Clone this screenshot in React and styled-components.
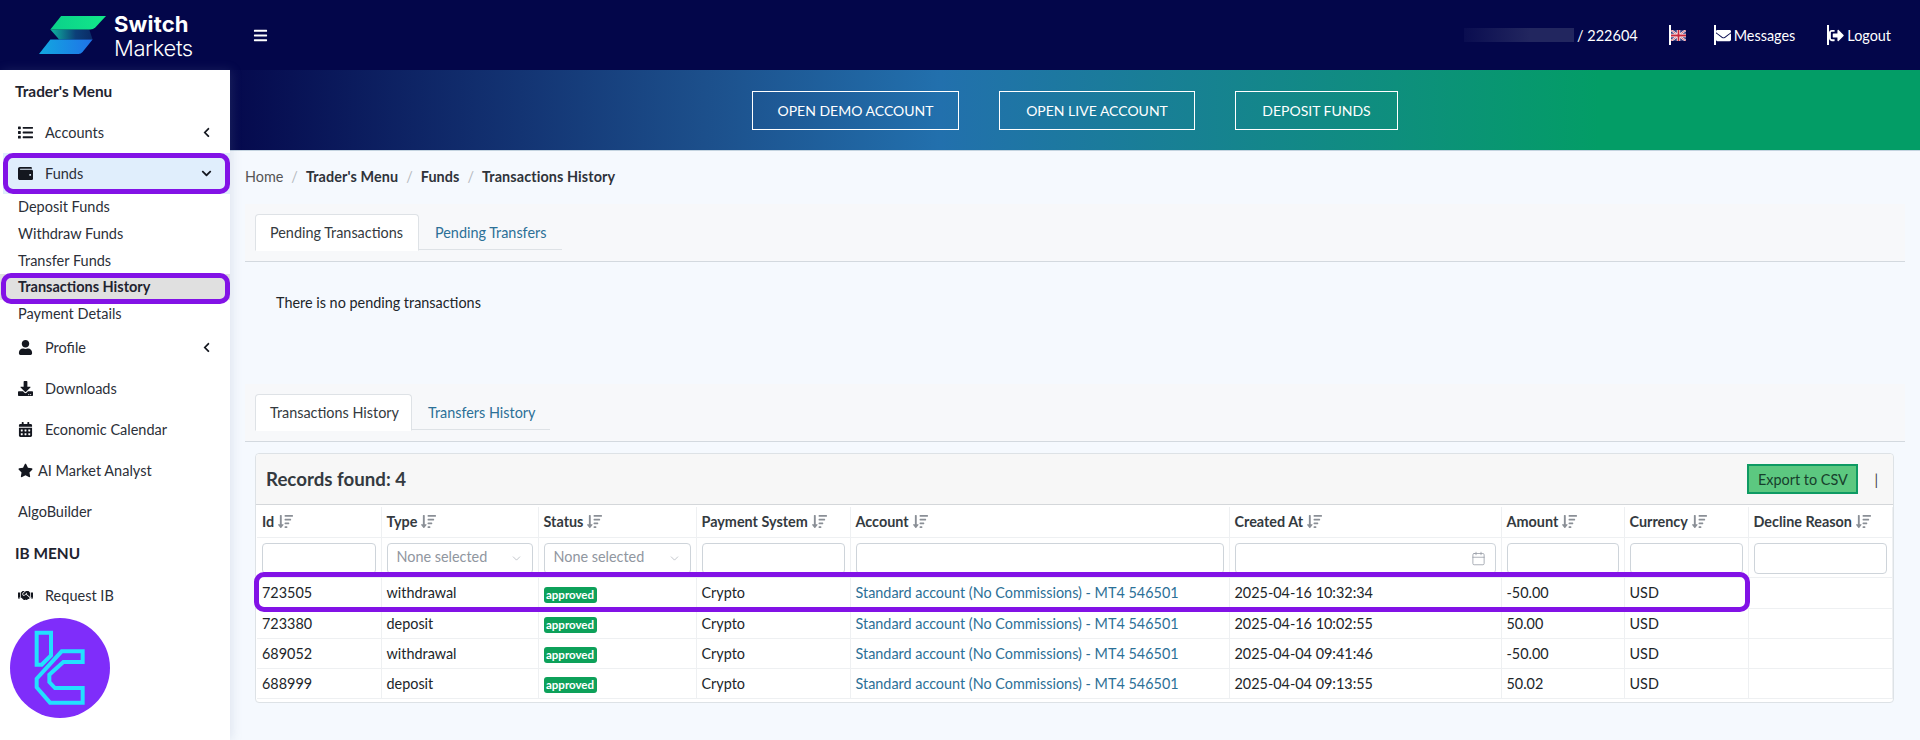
import styled, { createGlobalStyle } from "styled-components";
import {
  FaList,
  FaWallet,
  FaUser,
  FaDownload,
  FaCalendarAlt,
  FaStar,
  FaHandshake,
  FaBars,
  FaChevronLeft,
  FaChevronDown,
  FaEnvelope,
  FaSignOutAlt,
  FaSortAmountDown,
} from "react-icons/fa";
import { ChevronDown, Calendar } from "lucide-react";

const GlobalStyle = createGlobalStyle`
  html, body {
    margin: 0;
    height: 740px;
    overflow: hidden;
    background: #f5f9fe;
    font-family: "Lato", "Noto Sans", sans-serif;
    font-size: 14.4px;
    color: #212529;
  }
  * {
    box-sizing: border-box;
  }
`;

const Page = styled.div`
  width: 1920px;
  height: 740px;
  display: grid;
  grid-template-columns: 230px 1fr;
  grid-template-rows: 70px 670px;
`;

const TopBar = styled.header`
  grid-column: 1 / 3;
  background: #03064a;
  display: flex;
  align-items: center;
  color: #fff;
`;

const LogoBox = styled.div`
  width: 230px;
  display: flex;
  align-items: center;
  padding-left: 39px;
  gap: 8px;
`;

const LogoText = styled.div`
  font-family: "Inter", sans-serif;
  font-size: 22px;
  line-height: 24px;
  padding-top: 2px;
  color: #fff;
`;

const LogoStrong = styled.div`
  font-weight: 700;
  letter-spacing: 0.2px;
`;

const LogoLight = styled.div`
  font-weight: 300;
  letter-spacing: -0.4px;
`;

const MenuToggle = styled.div`
  margin-left: 23px;
  display: flex;
  font-size: 15px;
`;

const UserBox = styled.div`
  margin-left: auto;
  padding-right: 29px;
  display: flex;
  align-items: center;
`;

const MaskedName = styled.span`
  width: 110px;
  height: 14px;
  background: linear-gradient(90deg, #0a0d50, #22265f 60%);
`;

const Login = styled.span`
  margin-left: 3px;
  margin-right: 31px;
  font-size: 14.5px;
`;

const TopLink = styled.a`
  display: flex;
  align-items: center;
  height: 20px;
  border-left: 2px solid #fff;
  margin-right: ${(p) => p.$gap}px;
  font-size: 14.4px;
  color: #fff;
`;

const TopIcon = styled.span`
  width: 18px;
  display: flex;
  font-size: 15px;
`;

const Sidebar = styled.aside`
  background: #fff;
  box-shadow: 2px 0 10px rgba(120, 140, 170, 0.18);
  position: relative;
  z-index: 2;
`;

const SideTitle = styled.div`
  height: 41.5px;
  padding-left: 15px;
  display: flex;
  align-items: center;
  font-size: 15.4px;
  font-weight: 700;
  color: #1f2430;
`;

const SideItem = styled.div`
  position: relative;
  height: 41px;
  display: flex;
  align-items: center;
  padding-left: ${(p) => (p.$active ? "15px" : "18px")};
  font-size: 14.5px;
  color: #2b2f38;
  background: ${(p) => (p.$active ? "#e0eefc" : "transparent")};
  margin-left: ${(p) => (p.$active ? "3px" : "0")};
  margin-top: ${(p) => p.$top || 0}px;
  &::after {
    content: "";
    display: ${(p) => (p.$marked ? "block" : "none")};
    position: absolute;
    inset: 0;
    border: 5px solid #8212e6;
    border-radius: 10px;
  }
`;

const SideIcon = styled.span`
  width: ${(p) => p.$width || 27}px;
  display: flex;
  font-size: 15px;
  color: #14171f;
`;

const Caret = styled.span`
  margin-left: auto;
  margin-right: 18px;
  display: flex;
  font-size: 11px;
  color: #14171f;
`;

const SubItem = styled.div`
  position: relative;
  height: 26.7px;
  display: flex;
  align-items: center;
  padding-left: 18px;
  font-size: 14.5px;
  color: #2b2f38;
  ${(p) =>
    p.$active &&
    `
    font-weight: 700;
    color: #1f2430;
    background: #e0e0e0;
    &::after {
      content: "";
      position: absolute;
      inset: -1px 0 -4px 1px;
      border: 5px solid #8212e6;
      border-radius: 10px;
    }
  `}
`;

const BrandBadge = styled.svg`
  display: block;
  margin: 2px 0 0 10px;
  width: 100px;
  height: 100px;
`;

const Main = styled.main`
  min-width: 0;
  background: #f5f9fe;
`;

const Banner = styled.div`
  height: 81px;
  display: flex;
  align-items: center;
  justify-content: center;
  gap: 40px;
  background: linear-gradient(
    90deg,
    #05094d 0%,
    #1c4f8b 28%,
    #2270ad 42%,
    #0e8f7d 69%,
    #039d66 81%,
    #039d66 100%
  );
  border-bottom: 1px solid #c4d4e0;
`;

const BannerButton = styled.a`
  height: 39px;
  width: ${(p) => p.$width}px;
  display: flex;
  align-items: center;
  justify-content: center;
  border: 1px solid #fff;
  color: #fff;
  font-size: 14px;
`;

const Crumbs = styled.nav`
  height: 53px;
  display: flex;
  align-items: center;
  padding: 0 0 2px 15px;
`;

const Crumb = styled.span`
  font-weight: ${(p) => (p.$bold ? 700 : 400)};
  letter-spacing: ${(p) => (p.$bold ? "0.1px" : "0")};
  color: ${(p) => (p.$bold ? "#2f333a" : "#555")};
`;

const CrumbSep = styled.span`
  color: #b5b9c0;
  margin: 0 8px;
`;

const TabBar = styled.div`
  margin: 0 15px;
  padding: 10px 0 11px 10px;
  border-bottom: 1px solid #d3d9df;
  background: #f7f8fa;
`;

const TabList = styled.div`
  display: inline-flex;
  height: 36px;
  vertical-align: top;
  border-bottom: 1px solid #dee2e6;
`;

const Tab = styled.a`
  width: ${(p) => p.$width}px;
  padding-left: ${(p) => (p.$active ? 14 : 16)}px;
  height: 37px;
  display: flex;
  align-items: center;
  color: ${(p) => (p.$active ? "#343a40" : "#2c7097")};
  ${(p) =>
    p.$active &&
    `
    background: #fff;
    border: 1px solid #dee2e6;
    border-bottom: 1px solid #fff;
    border-radius: 4px 4px 0 0;
  `}
`;

const EmptyNote = styled.div`
  height: 122px;
  padding: 31px 0 0 46px;
  line-height: 20px;
  color: #212529;
`;

const Card = styled.section`
  position: relative;
  margin: 11px 26px 0 25px;
  height: 250px;
  border: 1px solid #dde2e6;
  border-radius: 4px;
  background: #fff;
`;

const CardHeader = styled.div`
  height: 51px;
  display: flex;
  align-items: center;
  padding: 0 0 0 10px;
  background: #f7f7f7;
  border-bottom: 1px solid #d4d7da;
  border-radius: 4px 4px 0 0;
`;

const CardTitle = styled.h2`
  margin: 0;
  font-size: 18.7px;
  font-weight: 700;
  color: #343a40;
`;

const ExportButton = styled.button`
  margin-left: auto;
  width: 111px;
  height: 30px;
  background: #5cc880;
  border: 2px solid #0e9a63;
  color: #17402c;
  font-family: inherit;
  font-size: 14.4px;
  padding: 0;
`;

const Pipe = styled.span`
  margin: 0 15px 0 16px;
  color: #444;
`;

const Table = styled.table`
  margin: 2px 0 0 1px;
  width: 1635px;
  table-layout: fixed;
  border-collapse: collapse;
`;

const HeadCell = styled.th`
  width: ${(p) => p.$width}px;
  height: 30px;
  padding: 0 5px;
  text-align: left;
  font-weight: 700;
  color: #343a40;
  border-right: 1px solid #eef0f2;
  border-bottom: 1px solid #eef0f2;
  white-space: nowrap;
  svg {
    color: #8a8f96;
    font-size: 15px;
    margin-left: 4px;
    vertical-align: -2px;
  }
`;

const FilterCell = styled.td`
  height: 40px;
  padding: 5px 5px 0;
  vertical-align: top;
  border-right: 1px solid #eef0f2;
  border-bottom: 1px solid #eef0f2;
`;

const FilterBox = styled.div`
  height: 31px;
  display: flex;
  align-items: center;
  padding: 0 9px 3px;
  background: #fff;
  border: 1px solid #ced4da;
  border-radius: 4px;
  color: #9096a0;
  white-space: nowrap;
  svg {
    flex: none;
    margin-left: auto;
    margin-bottom: -3px;
  }
`;

const DataRow = styled.tr`
  &:first-child td {
    height: 31px;
  }
`;

const Cell = styled.td`
  height: 30px;
  padding: 0 5px;
  white-space: nowrap;
  color: #212529;
  border-right: 1px solid #eef0f2;
  border-bottom: 1px solid #eef0f2;
`;

const AccountLink = styled.a`
  color: #2c7097;
`;

const Approved = styled.span`
  display: inline-block;
  height: 16px;
  width: 53px;
  line-height: 15px;
  text-align: center;
  border-radius: 3px;
  background: #0da15a;
  color: #fff;
  font-size: 11.5px;
  font-weight: 700;
  vertical-align: -2px;
`;

const RowMark = styled.div`
  position: absolute;
  left: -2px;
  top: 118px;
  width: 1496px;
  height: 40px;
  border: 5px solid #8212e6;
  border-radius: 10px;
  pointer-events: none;
`;

const columns = [
  ["Id", 124],
  ["Type", 157],
  ["Status", 158],
  ["Payment System", 154],
  ["Account", 379],
  ["Created At", 272],
  ["Amount", 123],
  ["Currency", 124],
  ["Decline Reason", 144],
];

const rows = [
  ["723505", "withdrawal", "2025-04-16 10:32:34", "-50.00"],
  ["723380", "deposit", "2025-04-16 10:02:55", "50.00"],
  ["689052", "withdrawal", "2025-04-04 09:41:46", "-50.00"],
  ["688999", "deposit", "2025-04-04 09:13:55", "50.02"],
];

function SwitchLogo() {
  return (
    <svg width="67" height="38" viewBox="28 32 200 113">
      <defs>
        <linearGradient id="swGreen" x1="0" y1="0" x2="1" y2="0">
          <stop offset="0" stopColor="#0bd08a" />
          <stop offset="1" stopColor="#12e889" />
        </linearGradient>
        <linearGradient id="swMid" x1="0" y1="0" x2="1" y2="0">
          <stop offset="0" stopColor="#0fb6a0" />
          <stop offset="0.6" stopColor="#0c3f78" />
          <stop offset="1" stopColor="#0a2a66" />
        </linearGradient>
        <linearGradient id="swBlue" x1="0" y1="0" x2="1" y2="0">
          <stop offset="0" stopColor="#12a8e0" />
          <stop offset="1" stopColor="#1f72e8" />
        </linearGradient>
      </defs>
      <path d="M62 72 H178 L188 102 H88 Z" fill="url(#swMid)" />
      <path d="M94 32 H228 L196 66 Q190 72 180 72 H62 Z" fill="url(#swGreen)" />
      <path d="M62 102 H188 L158 139 Q153 145 146 145 H28 Z" fill="url(#swBlue)" />
    </svg>
  );
}

function UkFlag() {
  return (
    <svg width="15" height="11" viewBox="0 0 15 11">
      <rect width="15" height="11" fill="#3a3f80" />
      <path d="M0 0 L15 11 M15 0 L0 11" stroke="#fff" strokeWidth="2" />
      <path d="M0 0 L15 11 M15 0 L0 11" stroke="#c8283c" strokeWidth="0.7" />
      <path d="M7.5 0 V11 M0 5.5 H15" stroke="#fff" strokeWidth="3.4" />
      <path d="M7.5 0 V11 M0 5.5 H15" stroke="#c8283c" strokeWidth="1.8" />
    </svg>
  );
}

function Emblem() {
  return (
    <BrandBadge viewBox="0 0 300 300">
      <circle cx="150" cy="150" r="150" fill="#7f2dfa" />
      <g fill="none" stroke="#22e0ff" strokeWidth="12" strokeLinejoin="miter">
        <path d="M80 44 H123 V112 L95 140 H80 Z" />
        <path d="M218 100 H155 L80 182 V208 L120 254 H218 V210 H135 L118 192 V170 L160 132 H218 Z" />
      </g>
    </BrandBadge>
  );
}

export default function App() {
  return (
    <Page>
      <GlobalStyle />
      <TopBar>
        <LogoBox>
          <SwitchLogo />
          <LogoText>
            <LogoStrong>Switch</LogoStrong>
            <LogoLight>Markets</LogoLight>
          </LogoText>
        </LogoBox>
        <MenuToggle>
          <FaBars />
        </MenuToggle>
        <UserBox>
          <MaskedName />
          <Login>/ 222604</Login>
          <TopLink $gap={28}>
            <UkFlag />
          </TopLink>
          <TopLink $gap={32}>
            <TopIcon><FaEnvelope /></TopIcon>
            Messages
          </TopLink>
          <TopLink $gap={0}>
            <TopIcon><FaSignOutAlt /></TopIcon>
            Logout
          </TopLink>
        </UserBox>
      </TopBar>

      <Sidebar>
        <SideTitle>Trader's Menu</SideTitle>
        <SideItem>
          <SideIcon><FaList /></SideIcon>
          Accounts
          <Caret><FaChevronLeft /></Caret>
        </SideItem>
        <SideItem $active $marked>
          <SideIcon><FaWallet /></SideIcon>
          Funds
          <Caret><FaChevronDown /></Caret>
        </SideItem>
        <SubItem>Deposit Funds</SubItem>
        <SubItem>Withdraw Funds</SubItem>
        <SubItem>Transfer Funds</SubItem>
        <SubItem $active>Transactions History</SubItem>
        <SubItem>Payment Details</SubItem>
        <SideItem>
          <SideIcon><FaUser /></SideIcon>
          Profile
          <Caret><FaChevronLeft /></Caret>
        </SideItem>
        <SideItem>
          <SideIcon><FaDownload /></SideIcon>
          Downloads
        </SideItem>
        <SideItem>
          <SideIcon><FaCalendarAlt /></SideIcon>
          Economic Calendar
        </SideItem>
        <SideItem>
          <SideIcon $width={20}><FaStar /></SideIcon>
          AI Market Analyst
        </SideItem>
        <SideItem>AlgoBuilder</SideItem>
        <SideTitle>IB MENU</SideTitle>
        <SideItem $top={2}>
          <SideIcon><FaHandshake /></SideIcon>
          Request IB
        </SideItem>
        <Emblem />
      </Sidebar>

      <Main>
        <Banner>
          <BannerButton $width={207}>OPEN DEMO ACCOUNT</BannerButton>
          <BannerButton $width={196}>OPEN LIVE ACCOUNT</BannerButton>
          <BannerButton $width={163}>DEPOSIT FUNDS</BannerButton>
        </Banner>
        <Crumbs>
          <Crumb>Home</Crumb>
          <CrumbSep>/</CrumbSep>
          <Crumb $bold>Trader's Menu</Crumb>
          <CrumbSep>/</CrumbSep>
          <Crumb $bold>Funds</Crumb>
          <CrumbSep>/</CrumbSep>
          <Crumb $bold>Transactions History</Crumb>
        </Crumbs>
        <TabBar>
          <TabList>
            <Tab $active $width={164}>Pending Transactions</Tab>
            <Tab $width={143}>Pending Transfers</Tab>
          </TabList>
        </TabBar>
        <EmptyNote>There is no pending transactions</EmptyNote>
        <TabBar>
          <TabList>
            <Tab $active $width={157}>Transactions History</Tab>
            <Tab $width={138}>Transfers History</Tab>
          </TabList>
        </TabBar>
        <Card>
          <CardHeader>
            <CardTitle>Records found: 4</CardTitle>
            <ExportButton>Export to CSV</ExportButton>
            <Pipe>|</Pipe>
          </CardHeader>
          <Table>
            <thead>
              <tr>
                {columns.map(([name, width]) => (
                  <HeadCell key={name} $width={width}>
                    {name}
                    <FaSortAmountDown />
                  </HeadCell>
                ))}
              </tr>
              <tr>
                {columns.map(([name]) => (
                  <FilterCell key={name}>
                    <FilterBox>
                      {(name === "Type" || name === "Status") && (
                        <>
                          None selected
                          <ChevronDown size={13} strokeWidth={1} />
                        </>
                      )}
                      {name === "Created At" && <Calendar size={15} strokeWidth={1.2} />}
                    </FilterBox>
                  </FilterCell>
                ))}
              </tr>
            </thead>
            <tbody>
              {rows.map(([id, type, created, amount]) => (
                <DataRow key={id}>
                  <Cell>{id}</Cell>
                  <Cell>{type}</Cell>
                  <Cell><Approved>approved</Approved></Cell>
                  <Cell>Crypto</Cell>
                  <Cell>
                    <AccountLink>Standard account (No Commissions) - MT4 546501</AccountLink>
                  </Cell>
                  <Cell>{created}</Cell>
                  <Cell>{amount}</Cell>
                  <Cell>USD</Cell>
                  <Cell />
                </DataRow>
              ))}
            </tbody>
          </Table>
          <RowMark />
        </Card>
      </Main>
    </Page>
  );
}
